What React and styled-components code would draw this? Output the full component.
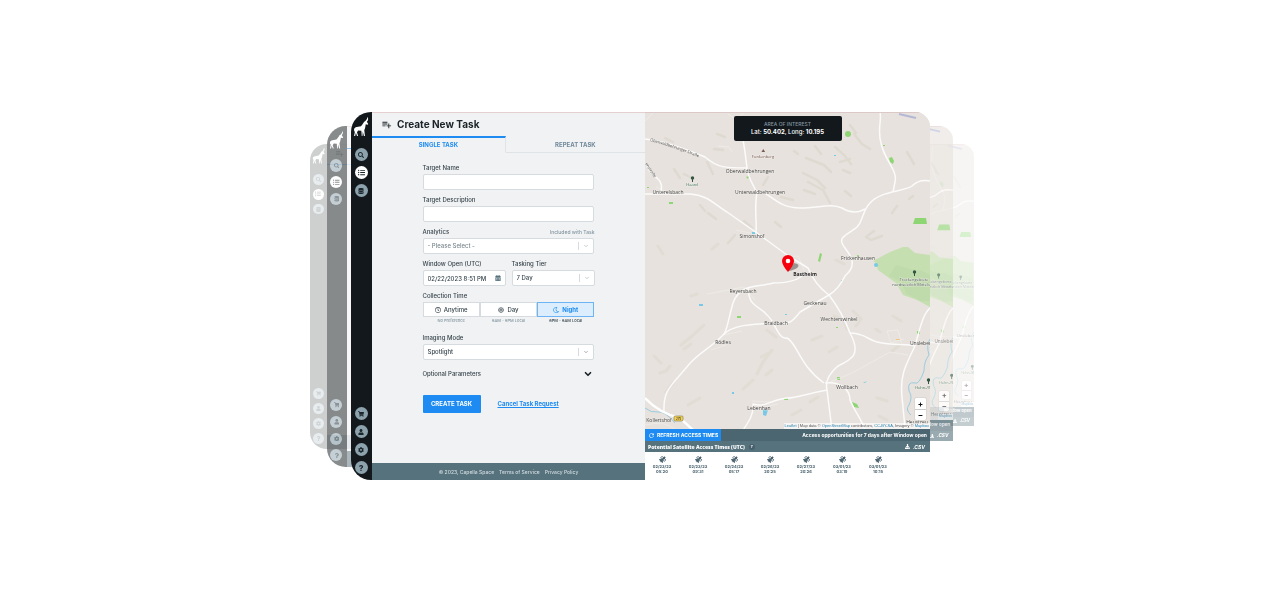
import React from "react";
import styled, { createGlobalStyle, css } from "styled-components";
import {
  FaSearch, FaDatabase, FaShoppingCart, FaUser, FaCog, FaQuestion, FaListUl,
  FaCalendarAlt, FaRegClock, FaRegSun, FaRegMoon, FaDownload, FaSatellite,
} from "react-icons/fa";
import { MdPlaylistAdd, MdRefresh } from "react-icons/md";
import { ChevronDown } from "lucide-react";

const c = {
  ink: "#12181b", panel: "#f1f2f4", text: "#37454c", muted: "#8296a0",
  blue: "#1d8bf1", slate: "#56727d", slateDark: "#4c6671", line: "#d5dbdf",
};

const GlobalStyle = createGlobalStyle`
  * { box-sizing: border-box; }
  body { margin: 0; background: #fff; color: ${c.text}; font: 500 6px/8px Inter, "Open Sans", sans-serif; }
  button, input, select { font: inherit; color: inherit; margin: 0; padding: 0; }
`;

const Page = styled.main`
  display: flex;
  justify-content: center;
  padding: 112px 16px 112px 20px;
`;

const Stack = styled.div`
  display: grid;
  width: 100%;
  max-width: 664px;
`;

const Layer = styled.div`
  grid-area: 1 / 1;
  display: flex;
  min-width: 0;
  margin: ${(p) => p.$margin};
  isolation: isolate;
`;

const Card = styled.section`
  flex: 1;
  display: flex;
  min-width: 0;
  zoom: ${(p) => p.$scale || 1};
`;

const Left = styled.div`
  flex: 1;
  display: flex;
  min-width: 0;
  overflow: hidden;
  border-radius: 20px 0 0 20px;
  opacity: ${(p) => p.$opacity};
`;

const Right = styled.div`
  flex: 0 0 285px;
  display: flex;
  flex-direction: column;
  min-width: 0;
  overflow: hidden;
  background: #fff;
  border-radius: 0 15px 15px 0;
  opacity: ${(p) => p.$opacity};
`;

const Sidebar = styled.nav`
  flex: 0 0 21px;
  display: flex;
  flex-direction: column;
  align-items: center;
  gap: 5px;
  padding: 4px 1px 6px 0;
  background: ${c.ink};
`;

const Logo = styled.svg`
  width: 16px;
  height: 21px;
  margin-bottom: 6px;
  fill: #fff;
`;

const NavButton = styled.button`
  display: flex;
  align-items: center;
  justify-content: center;
  width: 13px;
  height: 13px;
  border: 0;
  border-radius: 50%;
  background: ${(p) => (p.$active ? "#fff" : "#8ca2ad")};
  color: #1c272c;
  svg { width: ${(p) => (p.$active ? 7 : 6)}px; height: ${(p) => (p.$active ? 7 : 6)}px; }
`;

const Spacer = styled.div`flex: 1;`;

const FormPanel = styled.div`
  flex: 1;
  display: flex;
  flex-direction: column;
  min-width: 0;
  background: ${c.panel};
`;

const Header = styled.header`
  display: flex;
  align-items: center;
  gap: 5px;
  height: 24px;
  padding-left: 9px;
  box-shadow: inset 0 1px #e5cfd1;
  color: #1b2327;
  svg { width: 11px; height: 11px; }
`;

const Title = styled.h1`
  margin: 0;
  font-size: 10px;
  line-height: 12px;
  font-weight: 700;
`;

const Tabs = styled.div`display: flex;`;

const Tab = styled.button`
  flex: 1;
  height: 17px;
  border: 0;
  border-top: 2px solid transparent;
  border-bottom: 1px solid #dfe3e6;
  background: none;
  color: #71899a;
  font-weight: 700;
  ${(p) => p.$active && css`
    flex: 0 0 49%;
    border-top: 2px solid ${c.blue};
    border-right: 1px solid #e0e4e8;
    border-bottom-color: transparent;
    color: ${c.blue};
  `}
`;

const Form = styled.form`
  flex: 1;
  width: 63%;
  margin: 0 auto;
  padding-top: 11px;
`;

const Field = styled.div`
  flex: 1;
  display: flex;
  flex-direction: column;
  gap: 2px;
  min-width: 0;
  margin-bottom: ${(p) => (p.$last ? 10 : 6)}px;
`;

const LabelRow = styled.div`
  display: flex;
  justify-content: space-between;
  height: 8px;
`;

const Hint = styled.span`
  font-size: 5px;
  color: ${c.muted};
`;

const box = css`
  width: 100%;
  height: 16px;
  border: 1px solid ${c.line};
  border-radius: 2px;
  background: #fff;
  outline: 0;
`;

const Input = styled.input`
  ${box}
  padding: 0 4px;
`;

const Control = styled.div`
  ${box}
  display: flex;
  align-items: center;
  padding-right: 4px;
  svg { flex: none; width: 6px; height: 6px; color: ${(p) => p.$icon || "#93a1a9"}; }
`;

const Bare = styled.input`
  flex: 1;
  min-width: 0;
  height: 14px;
  border: 0;
  padding-left: 4px;
  background: none;
`;

const BareSelect = styled.select`
  flex: 1;
  min-width: 0;
  height: 14px;
  border: 0;
  padding-left: 4px;
  appearance: none;
  background: none;
  color: ${(p) => (p.$faded ? "#7b878d" : c.text)};
`;

const Divider = styled.span`
  width: 1px;
  height: 8px;
  margin-right: 4px;
  background: ${c.line};
`;

const Row = styled.div`
  display: flex;
  gap: 6px;
`;

const Segments = styled.fieldset`
  display: grid;
  grid-template-columns: repeat(3, 1fr);
  min-width: 0;
  margin: 0 0 9px;
  padding: 0;
  border: 0;
  text-align: center;
`;

const Legend = styled.legend`
  height: 10px;
  padding: 0;
  text-align: left;
`;

const Segment = styled.label`
  display: flex;
  align-items: center;
  justify-content: center;
  gap: 3px;
  height: 15px;
  border: 1px solid ${(p) => (p.$active ? "#6db4f5" : c.line)};
  background: ${(p) => (p.$active ? "#dceefd" : "#fff")};
  color: ${(p) => (p.$active ? c.blue : c.text)};
  font-weight: ${(p) => (p.$active ? 700 : 500)};
  input { appearance: none; width: 0; height: 0; }
  svg { width: 6px; height: 6px; margin-left: -3px; }
`;

const SegmentNote = styled.span`
  font-size: 4px;
  color: ${(p) => (p.$active ? c.text : c.muted)};
`;

const Optional = styled.button`
  display: flex;
  justify-content: space-between;
  align-items: center;
  width: 100%;
  height: 8px;
  border: 0;
  padding-right: 1px;
  background: none;
  svg { width: 10px; height: 10px; color: #1b2327; }
`;

const Actions = styled.div`
  display: flex;
  align-items: center;
  gap: 17px;
  margin: 17px 0 50px;
`;

const Primary = styled.button`
  width: 58px;
  height: 18px;
  border: 0;
  border-radius: 1px;
  background: ${c.blue};
  color: #fff;
  font-weight: 700;
`;

const Cancel = styled.a`
  color: ${c.blue};
  font-weight: 700;
`;

const Footer = styled.footer`
  display: flex;
  align-items: center;
  justify-content: center;
  gap: 5px;
  height: 17px;
  background: ${c.slate};
  color: #d3dde1;
  font-size: 5px;
  white-space: nowrap;
  a { color: inherit; text-decoration: none; }
`;

const MapArea = styled.div`
  position: relative;
  flex: 1 0 0;
  min-height: 0;
  overflow: hidden;
  background: #e7e2dd;
`;

const MapSvg = styled.svg`
  display: block;
  width: 100%;
  height: 100%;
`;

const AreaBox = styled.div`
  position: absolute;
  top: 4px;
  left: 50%;
  transform: translateX(-50%);
  width: 108px;
  padding: 4px 0 5px;
  border-radius: 2px;
  background: ${c.ink};
  color: #fff;
  text-align: center;
  white-space: nowrap;
  div { font-size: 5px; color: #8295a0; }
`;

const ZoomBox = styled.div`
  position: absolute;
  right: 4px;
  bottom: 9px;
  width: 11px;
  border-radius: 1px;
  background: #fff;
  box-shadow: 0 0 1px #777;
  button {
    display: block;
    width: 11px;
    height: 11px;
    border: 0;
    background: none;
    color: #111;
    font-size: 8px;
    font-weight: 700;
    line-height: 10px;
  }
  button + button { border-top: 1px solid #ccc; }
`;

const Attribution = styled.div`
  position: absolute;
  right: 0;
  bottom: 0;
  height: 6px;
  padding: 0 1px;
  background: rgba(255, 255, 255, 0.65);
  color: #555;
  font: 4px/6px "Liberation Sans", sans-serif;
  white-space: nowrap;
  a { color: #2a83b0; text-decoration: none; }
`;

const Bar = styled.div`
  display: flex;
  align-items: center;
  justify-content: space-between;
  height: ${(p) => (p.$dark ? 12 : 11)}px;
  padding-right: ${(p) => (p.$dark ? 3 : 5)}px;
  background: ${(p) => (p.$dark ? c.slateDark : c.slate)};
  color: #fff;
  font-size: 5px;
  font-weight: 700;
  white-space: nowrap;
`;

const Refresh = styled.button`
  display: flex;
  align-items: center;
  gap: 2px;
  width: 76px;
  height: 12px;
  border: 0;
  padding-left: 3px;
  background: ${c.blue};
  color: #fff;
  svg { width: 7px; height: 7px; }
`;

const BarTitle = styled.h2`
  margin: 0;
  padding-left: 3px;
  font: 800 5px/8px "Open Sans", sans-serif;
`;

const Help = styled.span`
  display: inline-block;
  width: 6px;
  margin-left: 4px;
  border-radius: 50%;
  background: #48606b;
  font-size: 4px;
  line-height: 6px;
  text-align: center;
  vertical-align: middle;
`;

const Csv = styled.button`
  display: flex;
  align-items: center;
  gap: 3px;
  border: 0;
  background: none;
  color: #fff;
  font-style: italic;
  svg { width: 5px; height: 5px; }
`;

const Times = styled.ul`
  display: flex;
  gap: 16px;
  height: 28px;
  margin: 0;
  padding: 4px 7px 0;
  list-style: none;
`;

const Time = styled.li`
  width: 20px;
  color: #48616c;
  font-size: 4px;
  line-height: 5px;
  font-weight: 700;
  text-align: center;
  white-space: nowrap;
  svg { display: block; width: 7px; height: 7px; margin: 0 auto 1px; }
`;

const roads = [
  "M645 139C665 141 688 150 705 157C718 168 725 168 747 168",
  "M743 140C745 150 746 160 747 168C748 178 753 184 757 193C754 208 757 220 756 233",
  "M757 192C770 190 775 208 800 208C820 208 830 203 842 208C850 213 858 213 865 209",
  "M645 194H690C708 195 715 205 727 212L757 233L787 255L808 268Q815 285 829 295",
  "M645 163Q651 175 657 178Q664 184 660 194",
  "M880 112C882 120 877 130 881 143C884 160 898 170 895 182L893 192",
  "M930 181Q919 179 912 186C903 192 880 191 870 203C861 212 864 224 853 230C842 237 838 239 845 248C852 257 857 266 845 276Q838 290 829 295",
  "M829 295C842 312 847 325 850 333C862 355 851 360 838 366C825 377 826 386 827 390L832 430",
  "M850 333C865 333 868 340 877 342C895 346 906 343 915 346",
  "M930 308C923 314 920 328 915 346C904 368 900 377 902 397L905 428",
  "M829 295L800 312C790 325 788 323 778 323C755 324 733 324 723 335",
  "M805 272Q799 283 773 283C757 288 740 283 733 303C727 324 727 332 723 335C710 349 697 353 686 368C670 387 663 390 664 413",
  "M748 288C749 309 760 305 767 315C775 321 778 340 787 338C798 344 799 365 824 383",
  "M827 390C805 394 797 398 787 398C773 399 765 408 753 404C754 416 747 424 743 430",
  "M825 383C842 381 850 391 850 400C855 412 862 420 865 430",
];

const minorRoads = [
  "M645 121L654 112", "M728 114L736 119L745 112", "M656 187L676 196", "M750 233L736 230",
  "M707 294L744 287L755 300M723 335L742 331M711 350L726 345", "M828 383L852 373L890 352L908 355",
  "M752 401L772 402L780 399M760 408L778 404", "M902 345L898 330L887 331L891 343L904 339",
  "M732 152L729 147L718 146", "M645 425Q665 420 676 430", "M804 270L798 256L788 257",
];

const hills = [
  "M665 138l8 4M674 169l6 9M684 174l8 4M700 205l5 6M708 213l8 6M707 162l6 12M723 150l-9-1M717 134l8 3",
  "M744 221l8 7M768 177l-5 8M781 197l12 3M794 151l4 3M775 222l6 5M735 235l-7 8",
  "M803 173l14 7l8 8M808 182l15 8l7 13M806 158l18 7l7 7M835 147l9 8l7 9M854 134l8 10l8 5M850 159l-10 3M815 146l6 8M845 191l6 5M804 190l11 4",
  "M892 213l5-7M874 231l-8 6l5 3l11-4M900 270l7-10M909 199l4-3M907 152l7 12M850 125l6 8M843 170l7 3",
];

const softHills = [
  "M704 325l-13 12l-10 8M684 349l7-5M660 373l6-2l4-5M673 383l-7 9M697 294l-6 2M761 357l8-4M772 350l-9 12l-6 12M766 375l6-5M753 380l-10 9M767 330l9 7M812 340l10-4M836 260l8 4",
  "M834 316l10 4l3 9M853 311l8 8l-5 7M876 329l4 3M829 352l8-5M893 316l8 5M901 344l-9 7M792 415l9-5M877 398l10 3M879 416l8 4M700 398l-12 7M658 246l5 8M712 249l6-5M654 356l7 7M810 402l8-5",
];

const places = [
  ["Oberwaldbehrungen", 750, 173], ["Unterwaldbehrungen", 760, 194], ["Unterelsbach", 668, 194],
  ["Simonshof", 752, 238], ["Reyersbach", 743, 293], ["Geckenau", 815, 305], ["Braidbach", 776, 325],
  ["Wechterswinkel", 839, 321], ["Rödles", 723, 344], ["Wollbach", 847, 389], ["Lebenhan", 759, 410],
  ["Frickenhausen", 858, 260], ["Unsleben", 921, 345], ["Kollertshof", 659, 422], ["Heustreu", 917, 424],
];

function MapDrawing({ id, ghost }) {
  return (
    <MapSvg viewBox="645 112 285 317" preserveAspectRatio="xMaxYMin slice" fontFamily="Open Sans, sans-serif" fontSize="5">
      <path d="M645 112h285v317h-285z" fill="#e7e2dd" />
      <g fill="none" stroke="#dfdad1" strokeWidth="2.500" strokeLinecap="round" strokeLinejoin="round">
        {hills.map((d) => <path key={d} d={d} />)}
      </g>
      <g fill="none" stroke="#e1dcd4" strokeWidth="3" strokeLinecap="round" strokeLinejoin="round">
        {softHills.map((d) => <path key={d} d={d} />)}
      </g>
      <path d="M873 261L890 252L903 247L908 247L915 253L930 255V307L917 300L903 295L896 283L878 270L876 263Z" fill="#c6dfb1" />
      <path d="M896 265l14 4l12 2l8 4v26l-9 0l-14-7l-6-12l-12-6z" fill="#bad7a6" opacity=".6" />
      <g fill="#8ed573">
        <path d="M915 218h11l1 6h-14z" />
        <circle cx="848" cy="134" r="3" /><path d="M889 158l3-1l2 4l-1 3l-3-2z" />
        <path d="M820 253l2 1l-2 8l-2-1zM746 177l3-1l-1 3zM669 202h4v2h-4zM737 316h4v2h-4zM852 402l5 2l2 4l-5-1zM917 331h3v3h-3zM837 377h3v3h-3zM784 398h4v2h-4zM647 187h2v1h-2zM883 145h2v1h-2zM836 327h2v1h-2zM857 255h2v2h-2z" />
      </g>
      <g fill="#77c9e5">
        <circle cx="876" cy="265" r="2" />
        <path d="M699 304h4v2h-4zM763 409l5 1l-2 6l-3-1zM863 383l4-2l-2 2zM732 392h2v2h-2zM752 232h3v2h-3zM834 155h2v1h-2zM841 280h2v1h-2zM785 314h2v1h-2z" />
      </g>
      <path d="M896 339h4v1h-4z" fill="#edc880" />
      <g fill="none" stroke="#9bcbe0">
        <path d="M930 339Q926 345 929 355Q924 361 924 371Q919 385 915 383Q907 381 909 391Q913 397 909 405Q905 410 911 415" />
        <path d="M645 408Q651 413 658 412T675 423" />
      </g>
      <g fill="none" stroke="#f1eeea" strokeWidth=".7">{minorRoads.map((d) => <path key={d} d={d} />)}</g>
      <g fill="none" stroke="#fbfbfb" strokeWidth="1.500" strokeLinejoin="round">{roads.map((d) => <path key={d} d={d} />)}</g>
      <path d="M645 398Q659 413 680 418L693 430" fill="none" stroke="#fff" strokeWidth="2.400" />
      <path d="M899 114l17 4" stroke="#b5b8d4" strokeWidth="2" />
      <path d="M645 112.500H930" stroke="#dcc8c7" />
      <g textAnchor="middle" fill="#414141" stroke="#f2efeb" strokeWidth=".6" paintOrder="stroke">
        {places.filter((p) => !ghost || p[1] > 900).map(([name, x, y]) => <text key={name} x={x} y={y}>{name}</text>)}
        <text x="914" y="281" fontSize="4" fill="#3e5843">Trockengebiete</text>
        <text x="915" y="286" fontSize="4" fill="#3e5843">nordwestlich Mittelstreu</text>
        <text x="926" y="389" fontSize="4" fill="#3e6b4c">Hohn-/Wart</text>
      </g>
      {!ghost && (
        <>
          <g textAnchor="middle" stroke="#f2efeb" strokeWidth=".6" paintOrder="stroke">
            <text x="805" y="276" fontWeight="700" fill="#222">Bastheim</text>
            <text x="763" y="158" fontSize="4" fill="#74534d">Funkenberg</text>
            <text x="692" y="186" fontSize="4" fill="#356b50">Haard</text>
          </g>
          <rect x="674" y="416" width="9" height="5" rx="1" fill="#f3d35c" stroke="#665d32" strokeWidth=".5" />
          <text x="678.500" y="420" fontSize="3" textAnchor="middle">279</text>
          <path id={`${id}-a`} d="M650 141Q673 147 698 157" fill="none" />
          <path id={`${id}-b`} d="M645 164L657 182" fill="none" />
          <g fontSize="4" fill="#555">
            <text><textPath href={`#${id}-a`}>Oberwaldbehrunger Straße</textPath></text>
            <text><textPath href={`#${id}-b`}>enstraße</textPath></text>
          </g>
        </>
      )}
      <g fill="#315542">
        <circle cx="692.500" cy="178" r="1.700" /><path d="M692 178h1v4h-1z" />
        <circle cx="914.500" cy="272" r="1.700" /><path d="M914 272h1v4h-1z" />
        <circle cx="928.500" cy="380" r="1.700" /><path d="M928 380h1v4h-1z" />
      </g>
      <path d="M761.500 152l1.800-3l1.800 3z" fill="#775a50" />
    </MapSvg>
  );
}

const Pin = styled.svg`
  position: absolute;
  left: 48%;
  top: 143px;
  width: 18px;
  height: 17px;
`;

const topNav = [["Search", FaSearch], ["Tasks", FaListUl, true], ["Data", FaDatabase]];
const bottomNav = [["Cart", FaShoppingCart], ["Account", FaUser], ["Settings", FaCog], ["Help", FaQuestion]];

function Side() {
  const item = ([label, Icon, active]) => (
    <NavButton key={label} type="button" aria-label={label} $active={active}><Icon /></NavButton>
  );
  return (
    <Sidebar>
      <Logo viewBox="0 0 44 56">
        <path d="M3 34Q6 29 14 29L22 27Q26 23 29 18Q30 14 34 13Q39 9 40 1Q44 9 38 15L42 21L40 23L35 22Q34 32 31 38L33 54H30L27 42L26 54H24L23 40L14 39L11 44L14 54H11L8 45L6 54H3L5 43L3 39Z" />
      </Logo>
      {topNav.map(item)}
      <Spacer />
      {bottomNav.map(item)}
    </Sidebar>
  );
}

function SelectBox({ id, value, faded, icon }) {
  return (
    <Control $icon={icon}>
      <BareSelect id={id} $faded={faded} defaultValue={value}><option>{value}</option></BareSelect>
      <Divider />
      <ChevronDown />
    </Control>
  );
}

function TaskForm() {
  return (
    <Form>
      <Field><LabelRow as="label" htmlFor="name">Target Name</LabelRow><Input id="name" /></Field>
      <Field><LabelRow as="label" htmlFor="description">Target Description</LabelRow><Input id="description" /></Field>
      <Field>
        <LabelRow><label htmlFor="analytics">Analytics</label><Hint>Included with Task</Hint></LabelRow>
        <SelectBox id="analytics" value="- Please Select -" faded />
      </Field>
      <Row>
        <Field>
          <LabelRow as="label" htmlFor="window">Window Open (UTC)</LabelRow>
          <Control $icon={c.slate}><Bare id="window" defaultValue="02/22/2023 8:51 PM" /><FaCalendarAlt /></Control>
        </Field>
        <Field>
          <LabelRow as="label" htmlFor="tier">Tasking Tier</LabelRow>
          <SelectBox id="tier" value="7 Day" />
        </Field>
      </Row>
      <Segments>
        <Legend>Collection Time</Legend>
        <Segment><input type="radio" name="time" /><FaRegClock />Anytime</Segment>
        <Segment><input type="radio" name="time" /><FaRegSun />Day</Segment>
        <Segment $active><input type="radio" name="time" defaultChecked /><FaRegMoon />Night</Segment>
        <SegmentNote>No Preference</SegmentNote>
        <SegmentNote>6AM - 6PM Local</SegmentNote>
        <SegmentNote $active>6PM - 6AM Local</SegmentNote>
      </Segments>
      <Field $last>
        <LabelRow as="label" htmlFor="mode">Imaging Mode</LabelRow>
        <SelectBox id="mode" value="Spotlight" icon="#5c6a72" />
      </Field>
      <Optional type="button">Optional Parameters<ChevronDown strokeWidth={4} /></Optional>
      <Actions>
        <Primary type="button">CREATE TASK</Primary>
        <Cancel href="#cancel">Cancel Task Request</Cancel>
      </Actions>
    </Form>
  );
}

const times = [
  ["02/23/23", "05:20"], ["02/23/23", "09:31"], ["02/24/23", "05:17"], ["02/26/23", "20:25"],
  ["02/27/23", "20:26"], ["03/01/23", "03:19"], ["03/01/23", "10:15"],
];

function TaskCard({ id, ghost, scale, left = 1, right = 1 }) {
  return (
    <Card $scale={scale} aria-hidden={ghost} inert={ghost}>
      <Left $opacity={left}>
        <Side />
        <FormPanel>
          <Header><MdPlaylistAdd />{!ghost && <Title>Create New Task</Title>}</Header>
          <Tabs>
            <Tab type="button" $active>{!ghost && "SINGLE TASK"}</Tab>
            <Tab type="button">{!ghost && "REPEAT TASK"}</Tab>
          </Tabs>
          {ghost ? <Spacer /> : <TaskForm />}
          <Footer>
            {!ghost && <><span>© 2023, Capella Space</span><a href="#terms">Terms of Service</a><a href="#privacy">Privacy Policy</a></>}
          </Footer>
        </FormPanel>
      </Left>
      <Right $opacity={right}>
        <MapArea>
          <MapDrawing id={id} ghost={ghost} />
          {!ghost && (
            <>
              <Pin viewBox="0 0 18 17">
                <path d="M6 16L12 8Q18 9 16 12Q13 15 6 16Z" fill="#4b4542" opacity=".5" />
                <path d="M6 17Q0 10 0 6A6 6 0 0 1 12 6Q12 10 6 17Z" fill="#f5000c" /><circle cx="6" cy="6" r="2.300" fill="#fff" />
              </Pin>
              <AreaBox><div>AREA OF INTEREST</div>Lat: <b>50.402</b>, Long: <b>10.195</b></AreaBox>
            </>
          )}
          <ZoomBox><button type="button">+</button><button type="button">−</button></ZoomBox>
          <Attribution>
            {!ghost && <><a href="#leaflet">Leaflet</a> | Map data © <a href="#osm">OpenStreetMap</a> contributors, <a href="#cc">CC-BY-SA</a>, Imagery © </>}
            <a href="#mapbox">Mapbox</a>
          </Attribution>
        </MapArea>
        <Bar $dark>
          {ghost ? <Spacer /> : <Refresh type="button"><MdRefresh />REFRESH ACCESS TIMES</Refresh>}
          <span>{ghost ? "Window open" : "Access opportunities for 7 days after Window open"}</span>
        </Bar>
        <Bar>
          {ghost ? <Spacer /> : <BarTitle>Potential Satellite Access Times (UTC)<Help>?</Help></BarTitle>}
          <Csv type="button"><FaDownload />.CSV</Csv>
        </Bar>
        <Times>
          {!ghost && times.map(([d, t]) => (
            <Time key={d + t}><FaSatellite />{d}<br />{t}</Time>
          ))}
        </Times>
      </Right>
    </Card>
  );
}

export default function App() {
  return (
    <>
      <GlobalStyle />
      <Page>
        <Stack>
          <Layer $margin="32px 0 31px"><TaskCard id="far" ghost scale={0.83} left={0.2} right={0.35} /></Layer>
          <Layer $margin="14px 21px 13px 17px"><TaskCard id="mid" ghost scale={0.93} left={0.5} right={0.6} /></Layer>
          <Layer $margin="0 44px 0 41px"><TaskCard id="front" /></Layer>
        </Stack>
      </Page>
    </>
  );
}
